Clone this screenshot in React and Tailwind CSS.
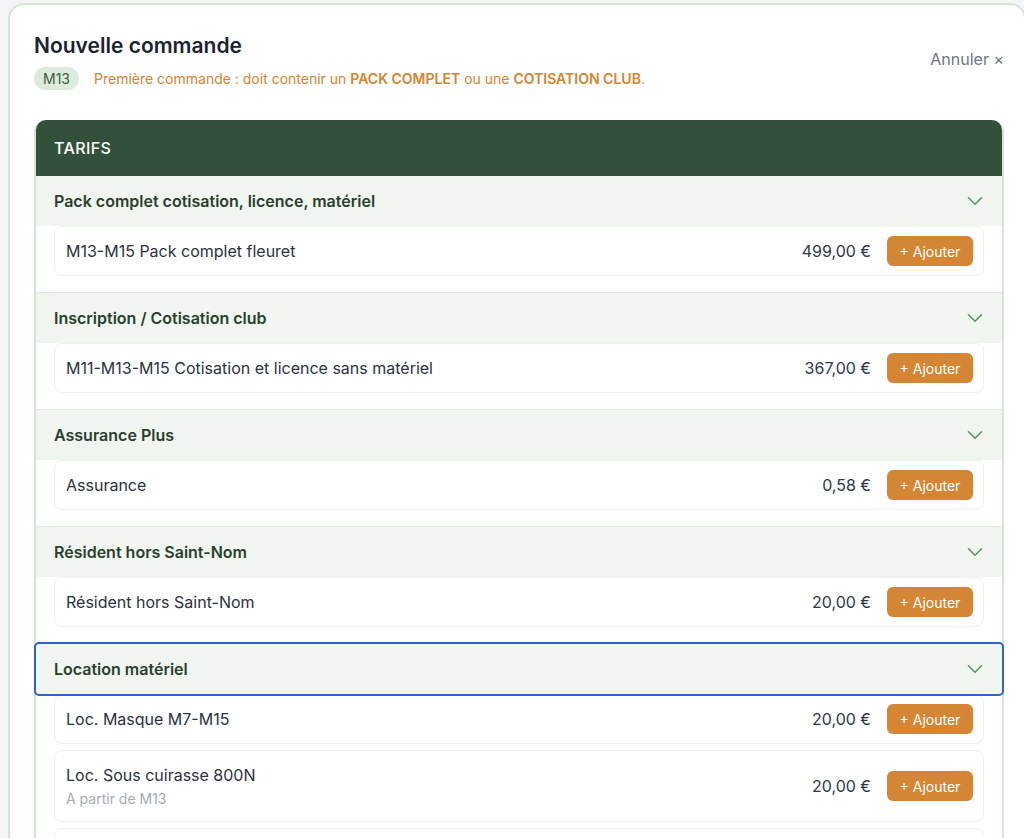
import { ChevronDown } from "lucide-react";

const SECTIONS = [
  {
    title: "Pack complet cotisation, licence, matériel",
    items: [{ name: "M13-M15 Pack complet fleuret", price: "499,00 €" }],
  },
  {
    title: "Inscription / Cotisation club",
    items: [{ name: "M11-M13-M15 Cotisation et licence sans matériel", price: "367,00 €" }],
  },
  {
    title: "Assurance Plus",
    items: [{ name: "Assurance", price: "0,58 €" }],
  },
  {
    title: "Résident hors Saint-Nom",
    items: [{ name: "Résident hors Saint-Nom", price: "20,00 €" }],
  },
  {
    title: "Location matériel",
    focused: true,
    items: [
      { name: "Loc. Masque M7-M15", price: "20,00 €" },
      { name: "Loc. Sous cuirasse 800N", price: "20,00 €", note: "A partir de M13" },
      { name: "Loc. Veste M13", price: "20,00 €" },
    ],
  },
];

function Item({ item }) {
  return (
    <div className="flex items-center justify-between rounded-lg border border-[#eef0ee] bg-white pl-[11px] pr-[10px] py-[9px]">
      <div className="flex flex-col py-1">
        <span className="text-[16px] text-[#2b3240] leading-[22px]">{item.name}</span>
        {item.note && (
          <span className="text-[14px] text-[#a7abb3] leading-[18px] mt-1">{item.note}</span>
        )}
      </div>
      <div className="flex items-center gap-4">
        <span className="text-[16px] text-[#2f3746]">{item.price}</span>
        <button className="h-[30px] w-[86px] rounded-md bg-[#d58634] text-[14px] text-white">
          + Ajouter
        </button>
      </div>
    </div>
  );
}

function Section({ section }) {
  return (
    <div className="border-b border-[#dcebdc]">
      <div
        className={
          section.focused
            ? "flex h-[50px] items-center justify-between bg-[#f0f5ef] pl-[18px] pr-[14px] outline-2 outline-[#2f64c9] rounded-[3px]"
            : "flex h-[50px] items-center justify-between bg-[#f0f5ef] pl-[18px] pr-[14px]"
        }
      >
        <span className="text-[16px] font-semibold text-[#2a3f2d]">{section.title}</span>
        <ChevronDown className="h-[26px] w-[26px] text-[#5a9a5e]" strokeWidth={1.5} />
      </div>
      <div className="flex flex-col gap-[6px] px-[18px] pb-4">
        {section.items.map((item) => (
          <Item key={item.name} item={item} />
        ))}
      </div>
    </div>
  );
}

export default function App() {
  return (
    <div
      className="min-h-screen bg-[#f4f5f6] pl-2 pt-[3px] overflow-hidden"
      style={{ fontFamily: "Inter, 'Noto Sans', sans-serif" }}
    >
      <div className="w-[1018px] rounded-2xl border-2 border-[#d3e6d2] bg-white px-6 pt-[27px] min-h-[840px]">
        <div className="flex w-[970px] items-start justify-between">
          <div>
            <h1 className="text-[21px] font-semibold text-[#1b2230] leading-7">Nouvelle commande</h1>
            <div className="mt-[7px] flex items-center gap-[15px]">
              <span className="flex h-[23px] items-center rounded-full bg-[#dcebdc] px-[9px] text-[14px] text-[#3d5a40]">
                M13
              </span>
              <span className="text-[14px] leading-5 text-[#d9822b]">
                Première commande : doit contenir un <span className="font-semibold">PACK COMPLET</span> ou une{" "}
                <span className="font-semibold">COTISATION CLUB</span>.
              </span>
            </div>
          </div>
          <button className="mt-[15px] text-[16px] text-[#70757f]">Annuler ×</button>
        </div>

        <div className="mt-[30px] w-[970px] rounded-t-xl border-x-2 border-[#d3e6d2]">
          <div className="flex h-[56px] items-center rounded-t-[10px] bg-[#33513a] px-[18px]">
            <span className="text-[16px] font-medium tracking-wide text-white">TARIFS</span>
          </div>
          {SECTIONS.map((s) => (
            <Section key={s.title} section={s} />
          ))}
        </div>
      </div>
    </div>
  );
}
